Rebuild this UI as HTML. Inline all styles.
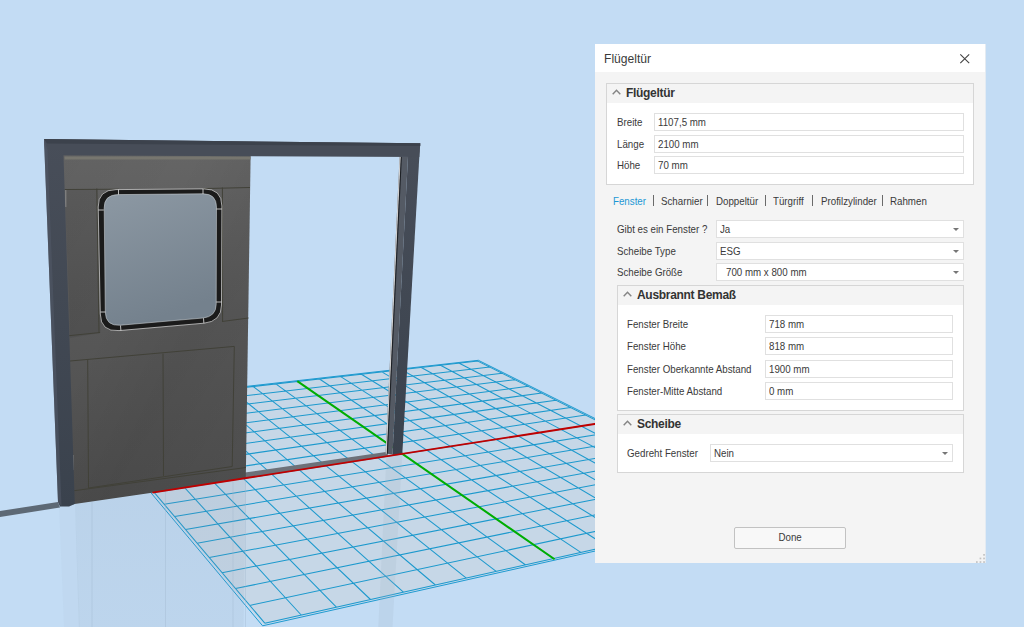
<!DOCTYPE html>
<html lang="de"><head><meta charset="utf-8"><title>Flügeltür</title><style>
html,body{margin:0;padding:0}
body{width:1024px;height:627px;overflow:hidden;background:#c3dcf4;position:relative;font-family:"Liberation Sans",sans-serif;font-size:11px;color:#3b3b3b}
#dlg{position:absolute;left:595px;top:44px;width:390px;height:519px;background:#f4f4f4;box-shadow:1px 0 0 #e4ebf2}
#ttl{position:absolute;left:0;top:0;width:390px;height:28px;background:#fff}
#ttl span{position:absolute;left:9px;top:7px;font-size:12.1px;line-height:16px;color:#3a3a3a;letter-spacing:0}
.abs{position:absolute}
.grp{position:absolute;border:1px solid #d6d6d6;background:#fff;box-sizing:border-box}
.gh{position:absolute;left:0;top:0;right:0;height:19px;background:#f4f4f4}
.gh b{position:absolute;top:1px;font-size:12px;line-height:16px;color:#333;font-weight:bold;letter-spacing:-0.3px}
.chev{position:absolute;top:5px;width:9px;height:6px}
.lbl{position:absolute;line-height:14px;white-space:nowrap;color:#3a3a3a;transform:scaleX(.885);transform-origin:0 0}
.t{display:inline-block;transform:scaleX(.885);transform-origin:0 0}
.inp{position:absolute;box-sizing:border-box;height:18px;border:1px solid #e0e0e0;background:#fff;line-height:16px;padding-left:3px;white-space:nowrap;color:#3a3a3a}
.arr{position:absolute;right:4px;top:7px;width:0;height:0;border-left:3px solid transparent;border-right:3px solid transparent;border-top:3px solid #767676}
.tabs{position:absolute;left:18px;top:150px;line-height:14px;white-space:nowrap;color:#3a3a3a}
.tabs .s{color:#555;margin:0 5px}
.on{color:#1c97d4 !important}
#btn{position:absolute;left:139px;top:483px;width:112px;height:22px;box-sizing:border-box;border:1px solid #c2c2c2;border-radius:2px;background:#f8f8f8;text-align:center;line-height:19px;color:#3a3a3a}
</style></head><body>
<svg width="1024" height="627" viewBox="0 0 1024 627" style="position:absolute;left:0;top:0">
<defs>
<linearGradient id="doorg" x1="0" y1="0" x2="0" y2="1"><stop offset="0" stop-color="#656565"/><stop offset="0.45" stop-color="#585858"/><stop offset="1" stop-color="#4d4d4d"/></linearGradient>
<linearGradient id="glass" x1="0" y1="0" x2="0.3" y2="1"><stop offset="0" stop-color="#8c98a3"/><stop offset="1" stop-color="#74818d"/></linearGradient>
<linearGradient id="postg" x1="0" y1="0" x2="0" y2="1"><stop offset="0" stop-color="#484e59"/><stop offset="1" stop-color="#3a424d"/></linearGradient>
<linearGradient id="refl" x1="0" y1="0" x2="0" y2="1"><stop offset="0" stop-color="#7f8fa3" stop-opacity="0.13"/><stop offset="1" stop-color="#7f8fa3" stop-opacity="0.09"/></linearGradient>
<linearGradient id="sheen" x1="0" y1="0" x2="1" y2="1"><stop offset="0" stop-color="#000" stop-opacity="0.03"/><stop offset="0.35" stop-color="#000" stop-opacity="0.0"/><stop offset="0.6" stop-color="#000" stop-opacity="0.06"/><stop offset="1" stop-color="#000" stop-opacity="0"/></linearGradient>
</defs>
<rect width="1024" height="627" fill="#c3dcf4"/>
<polygon points="79.1,405.7 478.1,360.6 776.0,509.6 263.6,624.6" fill="#c6d7e7"/>
<path d="M264.8 623.2L81.0 405.9M264.8 623.2L773.6 509.2M301.2 615.0L107.2 403.0M249.8 605.4L751.2 498.0M336.4 607.1L132.9 400.1M235.5 588.6L729.8 487.3M370.5 599.5L158.0 397.2M222.1 572.7L709.2 477.0M403.4 592.1L182.6 394.4M209.3 557.6L689.4 467.1M435.4 585.0L206.7 391.7M197.1 543.2L670.5 457.6M466.3 578.1L230.2 389.1M185.6 529.6L652.2 448.4M496.2 571.4L253.2 386.5M174.6 516.6L634.7 439.6M525.3 564.8L275.8 383.9M164.1 504.2L617.8 431.2M553.4 558.5L297.8 381.4M154.1 492.4L601.5 423.0M580.8 552.4L319.5 379.0M144.5 481.0L585.8 415.1M607.3 546.5L340.7 376.6M135.4 470.2L570.6 407.6M633.1 540.7L361.4 374.2M126.6 459.9L556.0 400.2M658.2 535.1L381.8 371.9M118.2 449.9L541.8 393.1M682.6 529.6L401.7 369.7M110.1 440.4L528.2 386.3M706.3 524.3L421.3 367.5M102.4 431.3L515.0 379.7M729.3 519.1L440.5 365.3M95.0 422.5L502.2 373.3M751.8 514.1L459.3 363.2M87.8 414.1L489.8 367.1M773.6 509.2L477.8 361.1M81.0 405.9L477.8 361.1" stroke="#1c99cd" stroke-width="1.05" fill="none"/>
<polygon points="77.6,405.4 478.4,360.3 778.1,509.9 262.6,625.8" fill="none" stroke="#1f9acf" stroke-width="1"/>
<polygon points="75,504 152,493 246,478 243.6,627 78.8,627" fill="url(#refl)"/>
<polygon points="59,506 75,504 80,627 64,627" fill="#8a9bb0" fill-opacity="0.05"/>
<path d="M92,502V627M165.5,491V627M233,481V627M245.5,478V627" stroke="#9fb4cc" stroke-opacity="0.35" stroke-width="1" fill="none"/>
<polygon points="386.5,454 402.3,454 392.5,627 378.3,627" fill="#9fb2c8" fill-opacity="0.2"/>
<line x1="297.3" y1="381.1" x2="554.6" y2="559.3" stroke="#00ae00" stroke-width="2"/>
<polygon points="0,511 58,502 60,507.5 0,517" fill="#5d6975"/>
<polygon points="245,472.6 387.5,451.7 388,455.8 245,478.6" fill="#6d7179"/>
<polygon points="399.6,156.5 408,156.5 392.5,454.5 385.6,453.5" fill="#545a64"/>
<polygon points="399.6,156.5 401,156.5 387,453.8 385.6,453.5" fill="#cfcfcf"/>
<polygon points="400.8,156.5 401.9,156.5 387.9,453.8 386.8,453.5" fill="#1e2126"/>
<polygon points="408,156.5 420,143.3 419.3,157 402.3,454 392.5,455" fill="url(#postg)"/>
<polygon points="62,154.5 250.6,154.5 250.6,156.5 245.8,478 152,492.8 73,504.3" fill="url(#doorg)"/>
<polygon points="62,154.5 250.6,154.5 250.6,156.5 245.8,478 152,492.8 73,504.3" fill="url(#sheen)"/>
<polygon points="64.5,190 98,189 100.5,333 70,338 69,300" fill="#000" fill-opacity="0.07"/>
<polygon points="64.5,156.5 250.6,156.5 250.5,159.5 64.6,159.5" fill="#77766f"/>
<path d="M64.5 189.5L119 189.2M203 188.6L250 187.5M96.8 188.5L99 333M222.4 187.5L222.6 322 M66 336L100 332.5M222 321.5L248.5 318" stroke="#414138" stroke-width="1" fill="none"/>
<path d="M70 361L234.3 346.4M87.7 359.5L88.5 488M163 353.6L163.5 476M234.3 346.4L232.2 466.5M88.5 488L232.2 466.5M72 491L246 467.5" stroke="#414138" stroke-width="1" fill="none"/>
<path d="M65.8 190V207M73 455V470" stroke="#8e8e8e" stroke-width="1" fill="none"/>
<path d="M116,189.6 L204,188.9 Q221.8,188.8 221.9,206 L221.5,305 Q221.4,321.5 204,323.2 L119,330.6 Q100.6,332 100.3,314 L98.2,207 Q98,189.8 116,189.6 Z" fill="#1b1b1b" stroke="#dcdcdc" stroke-width="0.7"/>
<path d="M118,194.6 L203,193.8 Q216.4,193.8 216.5,207 L216.2,304 Q216.2,316.6 203,318 L120.5,325.2 Q105.6,326.4 105.3,312 L104.2,208 Q104,194.8 118,194.6 Z" fill="url(#glass)" stroke="#c4c9cd" stroke-width="0.6"/>
<path d="M118.5,189.5v5M203,189v5M98.3,210h5.5M216.4,209h5.5M100.5,312h5M216.2,302h5.3M120.5,325.5l0.4,5M203.5,318.2l0.4,5" stroke="#e6e6e6" stroke-width="0.8" fill="none"/>
<polygon points="44,139 420.3,143.3 419.3,157 48.5,155.3 45,150" fill="#474d58"/>
<polygon points="44,139 420.3,143.3 420.3,146 47,143.5" fill="#3c424c"/>
<polygon points="44,139 50,150 63.4,150 63.5,155.5 74.8,504 69,506.5 60,506.5 58,502" fill="url(#postg)"/>
<polygon points="44,139 47.5,150 61.5,506 58,502" fill="#525a67" fill-opacity="0.55"/>
<line x1="152.4" y1="492.6" x2="602.5" y2="422.8" stroke="#c00000" stroke-width="1.9"/>
</svg>
<div id="dlg">
<div id="ttl"><span>Flügeltür</span><svg class="abs" style="left:364px;top:9px" width="12" height="12" viewBox="0 0 12 12"><path d="M1.3 1.3L10.2 10.2M10.2 1.3L1.3 10.2" stroke="#444" stroke-width="1.1" fill="none"/></svg></div>
<div class="grp" style="left:11px;top:39px;width:368px;height:102px"><div class="gh"><svg class="chev" style="left:5px" viewBox="0 0 9 6"><path d="M0.7 5.3L4.5 1.2L8.3 5.3" fill="none" stroke="#858585" stroke-width="1.4"/></svg><b style="left:19px">Flügeltür</b></div>
<div class="lbl" style="left:10px;top:31px">Breite</div>
<div class="inp" style="left:47px;top:29px;width:310px;padding-left:3px"><span class="t">1107,5 mm</span></div>
<div class="lbl" style="left:10px;top:53px">Länge</div>
<div class="inp" style="left:47px;top:51px;width:310px;padding-left:3px"><span class="t">2100 mm</span></div>
<div class="lbl" style="left:10px;top:74px">Höhe</div>
<div class="inp" style="left:47px;top:72px;width:310px;padding-left:3px"><span class="t">70 mm</span></div>
</div>
<div class="lbl on" style="left:17.8px;top:150px">Fenster</div>
<div class="lbl" style="left:65.6px;top:150px">Scharnier</div>
<div class="lbl" style="left:120.7px;top:150px">Doppeltür</div>
<div class="lbl" style="left:177.8px;top:150px">Türgriff</div>
<div class="lbl" style="left:225.6px;top:150px">Profilzylinder</div>
<div class="lbl" style="left:294.9px;top:150px">Rahmen</div>
<div class="abs" style="left:57.6px;top:151px;width:1px;height:11px;background:#6a6a6a"></div>
<div class="abs" style="left:112.4px;top:151px;width:1px;height:11px;background:#6a6a6a"></div>
<div class="abs" style="left:169.8px;top:151px;width:1px;height:11px;background:#6a6a6a"></div>
<div class="abs" style="left:217.3px;top:151px;width:1px;height:11px;background:#6a6a6a"></div>
<div class="abs" style="left:287.0px;top:151px;width:1px;height:11px;background:#6a6a6a"></div>
<div class="lbl" style="left:22px;top:178px">Gibt es ein Fenster ?</div>
<div class="inp" style="left:121px;top:176px;width:248px;padding-left:3px"><span class="t">Ja</span><i class=arr></i></div>
<div class="lbl" style="left:22px;top:200px">Scheibe Type</div>
<div class="inp" style="left:121px;top:198px;width:248px;padding-left:3px"><span class="t">ESG</span><i class=arr></i></div>
<div class="lbl" style="left:22px;top:221px">Scheibe Größe</div>
<div class="inp" style="left:121px;top:219px;width:248px;padding-left:9px"><span class="t">700 mm x 800 mm</span><i class=arr></i></div>
<div class="grp" style="left:22px;top:241px;width:347px;height:126px"><div class="gh"><svg class="chev" style="left:5px" viewBox="0 0 9 6"><path d="M0.7 5.3L4.5 1.2L8.3 5.3" fill="none" stroke="#858585" stroke-width="1.4"/></svg><b style="left:19px">Ausbrannt Bemaß</b></div>
<div class="lbl" style="left:9px;top:31px">Fenster Breite</div>
<div class="inp" style="left:147px;top:29px;width:188px;padding-left:3px"><span class="t">718 mm</span></div>
<div class="lbl" style="left:9px;top:53px">Fenster Höhe</div>
<div class="inp" style="left:147px;top:51px;width:188px;padding-left:3px"><span class="t">818 mm</span></div>
<div class="lbl" style="left:9px;top:76px">Fenster Oberkannte Abstand</div>
<div class="inp" style="left:147px;top:74px;width:188px;padding-left:3px"><span class="t">1900 mm</span></div>
<div class="lbl" style="left:9px;top:98px">Fenster-Mitte Abstand</div>
<div class="inp" style="left:147px;top:96px;width:188px;padding-left:3px"><span class="t">0 mm</span></div>
</div>
<div class="grp" style="left:22px;top:370px;width:347px;height:59px"><div class="gh"><svg class="chev" style="left:5px" viewBox="0 0 9 6"><path d="M0.7 5.3L4.5 1.2L8.3 5.3" fill="none" stroke="#858585" stroke-width="1.4"/></svg><b style="left:19px">Scheibe</b></div>
<div class="lbl" style="left:9px;top:31px">Gedreht Fenster</div>
<div class="inp" style="left:92px;top:29px;width:243px;padding-left:3px"><span class="t">Nein</span><i class=arr></i></div>
</div>
<div id="btn"><span class="t" style="transform-origin:50% 0">Done</span></div>
<svg class="abs" style="left:380.4px;top:508.8px" width="12" height="12" viewBox="0 0 12 12"><g fill="#c2c2c2"><rect x="8.2" y="1" width="1.7" height="1.7"/><rect x="4.6" y="4.6" width="1.7" height="1.7"/><rect x="8.2" y="4.6" width="1.7" height="1.7"/><rect x="1" y="8.2" width="1.7" height="1.7"/><rect x="4.6" y="8.2" width="1.7" height="1.7"/><rect x="8.2" y="8.2" width="1.7" height="1.7"/></g></svg>
</div>
</body></html>
